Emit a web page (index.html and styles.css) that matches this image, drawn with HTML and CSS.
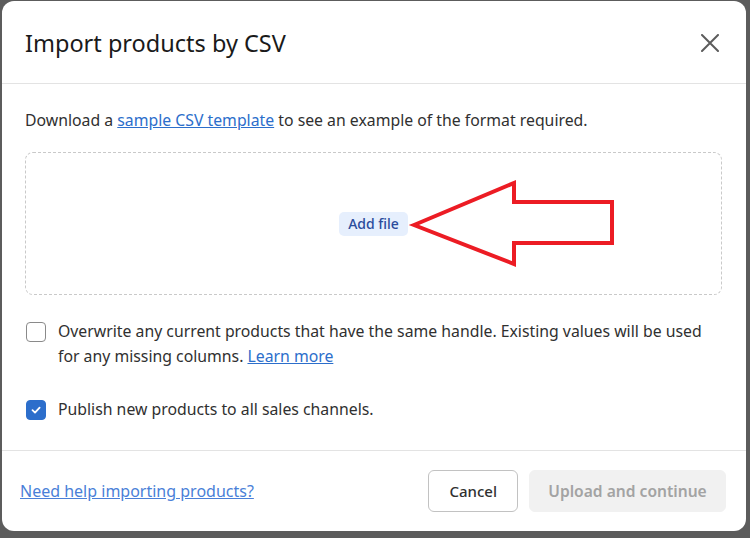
FILE: index.html
```html
<!DOCTYPE html>
<html lang="en">
  <head>
    <meta charset="utf-8" />
    <title>Import products by CSV</title>
    <link rel="stylesheet" href="styles.css">
  </head>
<body>

<div class="modal">
  <div class="modal-head">
    <h2>Import products by CSV</h2>
    <button class="close" aria-label="Close">
      <svg width="18" height="18" viewBox="0 0 18 18"><path d="M1 1L17 17M17 1L1 17" stroke="#5c5c5c" stroke-width="2" stroke-linecap="round" fill="none"/></svg>
    </button>
  </div>

  <div class="modal-body">
    <p class="intro">Download a <a href="#">sample CSV template</a> to see an example of the format required.</p>

    <div class="dropzone">
      <span class="add-file">Add file</span>
      <svg class="arrow" width="600" height="143" viewBox="0 0 600 143">
        <polygon points="388,72 488,30 488,49 586,49 586,90 488,90 488,111" fill="none" stroke="#ec1c24" stroke-width="4" stroke-linejoin="miter"/>
      </svg>
    </div>

    <label class="check">
      <span class="box"></span>
      <span>Overwrite any current products that have the same handle. Existing values will be used for any missing columns. <a href="#">Learn more</a></span>
    </label>

    <label class="check">
      <span class="box on">
        <svg width="12" height="12" viewBox="0 0 12 12"><path d="M2.5 6.2L5 8.6L9.6 3.6" stroke="#fff" stroke-width="1.8" stroke-linecap="round" stroke-linejoin="round" fill="none"/></svg>
      </span>
      <span>Publish new products to all sales channels.</span>
    </label>
  </div>

  <div class="modal-foot">
    <a href="#" class="help">Need help importing products?</a>
    <div class="buttons">
      <button class="btn">Cancel</button>
      <button class="btn primary" disabled>Upload and continue</button>
    </div>
  </div>
</div>

</body>
</html>
```

FILE: styles.css
```css
body {
    margin: 0;
    background: #5c5c5c;
    font-family: "Noto Sans", sans-serif;
    color: #303030;
}
a {
    color: #2c6ecb;
}
.modal {
    margin: 1px 0 0 2px;
    width: 744px;
    height: 530px;
    background: #fff;
    border-radius: 12px;
    display: flex;
    flex-direction: column;
}
.modal-head {
    height: 82px;
    border-bottom: 1px solid #e3e3e3;
    display: flex;
    align-items: center;
    justify-content: space-between;
    padding: 2px 27px 0 23px;
}
.modal-head h2 {
    margin: 0;
    font-size: 23.5px;
    font-weight: 400;
    color: #1a1a1a;
}
.close {
    border: 0;
    background: none;
    padding: 0;
    width: 18px;
    height: 18px;
    display: flex;
}
.modal-body {
    flex: 1;
    padding: 26px 24px 0 23px;
    font-size: 15.8px;
}
.intro {
    margin: 0 0 22px;
    line-height: 20px;
}
.dropzone {
    position: relative;
    height: 141px;
    border: 1px dashed #c9c9c9;
    border-radius: 8px;
    display: flex;
    align-items: center;
    justify-content: center;
    margin-bottom: 24px;
}
.add-file {
    background: #e6effd;
    color: #2b4c9c;
    font-weight: 500;
    font-size: 14px;
    padding: 2px 9px;
    border-radius: 5px;
    line-height: 20px;
}
.arrow {
    position: absolute;
    left: 0;
    top: 0;
}
.check {
    display: flex;
    gap: 12px;
    line-height: 25px;
    margin-bottom: 28px;
}
.box {
    flex: none;
    width: 18px;
    height: 18px;
    margin: 3px 0 0 1px;
    border: 1.5px solid #8a8a8a;
    border-radius: 4px;
    display: flex;
    align-items: center;
    justify-content: center;
}
.box.on {
    background: #2c6ecb;
    border-color: #2c6ecb;
}
.modal-foot {
    height: 81px;
    border-top: 1px solid #e3e3e3;
    display: flex;
    align-items: center;
    justify-content: space-between;
    padding: 0 20px 0 18px;
}
.help {
    font-size: 16px;
    color: #4a7fd8;
}
.buttons {
    display: flex;
    gap: 11px;
}
.btn {
    font-family: inherit;
    font-size: 15px;
    font-weight: 500;
    height: 42px;
    padding: 0 20px;
    border: 1px solid #c2c2c2;
    border-radius: 6px;
    background: #fff;
    color: #303030;
    white-space: nowrap;
}
.btn.primary {
    width: 197px;
    padding: 0;
    border-color: #f1f1f1;
    background: #f1f1f1;
    color: #a3a3a3;
    font-size: 15.6px;
    font-weight: 600;
}
```
